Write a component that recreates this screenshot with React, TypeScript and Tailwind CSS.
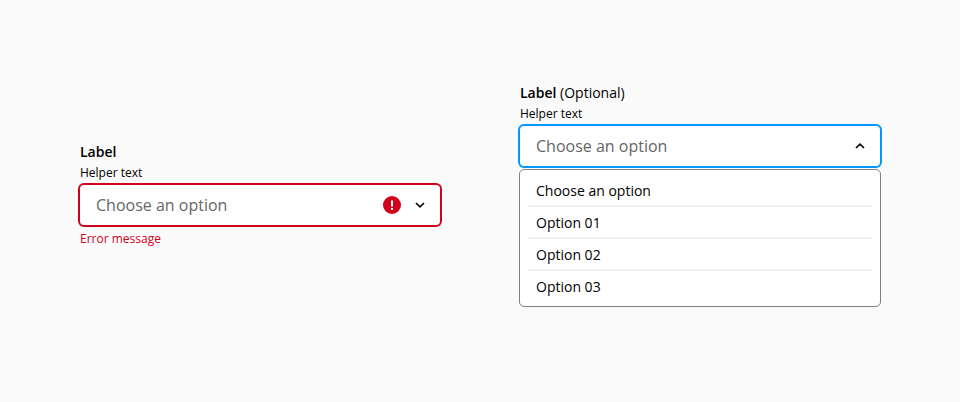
import React from 'react';

function Chevron({ up = false }: { up?: boolean }) {
  return (
    <svg width="10" height="6" viewBox="0 0 10 6" fill="none" className={up ? 'rotate-180' : ''}>
      <path d="M1 1L5 4.8L9 1" stroke="#000" strokeWidth="1.6" />
    </svg>
  );
}

function ErrorIcon() {
  return (
    <svg width="18" height="18" viewBox="0 0 18 18">
      <circle cx="9" cy="9" r="9" fill="#d0021b" />
      <rect x="8" y="4.5" width="2" height="6" fill="#fff" />
      <rect x="8" y="12" width="2" height="2" fill="#fff" />
    </svg>
  );
}

const options = ['Choose an option', 'Option 01', 'Option 02', 'Option 03'];

export default function App() {
  return (
    <main className="flex h-[402px] w-[960px] items-start bg-[#fafafa] pl-[78px] font-['Open_Sans',sans-serif] text-black">
      <section className="mt-[142px] w-[364px]">
        <div className="pl-0.5 text-sm leading-5 font-semibold">Label</div>
        <div className="mt-0.5 pl-0.5 text-xs leading-[18px]">Helper text</div>
        <div className="mt-px flex h-11 items-center rounded-[6px] border-2 border-[#d0021b] bg-white pr-[15px] pl-4">
          <span className="flex-1 text-base leading-6 text-[#666]">Choose an option</span>
          <ErrorIcon />
          <span className="ml-[14px]"><Chevron /></span>
        </div>
        <div className="mt-[3px] pl-0.5 text-xs leading-[18px] text-[#d0021b]">Error message</div>
      </section>
      <section className="mt-[83px] ml-[76px] w-[364px]">
        <div className="pl-0.5 text-sm leading-5"><span className="font-semibold">Label</span> (Optional)</div>
        <div className="mt-0.5 pl-0.5 text-xs leading-[18px]">Helper text</div>
        <div className="mt-px flex h-11 items-center rounded-[6px] border-2 border-[#0095ff] bg-white pr-[15px] pl-4">
          <span className="flex-1 text-base leading-6 text-[#666]">Choose an option</span>
          <Chevron up />
        </div>
        <ul className="mx-px mt-px h-[138px] rounded-[5px] border border-[#808080] bg-white px-2 pt-[5px]">
          {options.map((option, i) => (
            <li key={option} className={`flex h-8 items-center px-2 text-sm ${i < 3 ? 'border-b-2 border-[#f2f2f2] pt-0.5' : ''}`}>{option}</li>
          ))}
        </ul>
      </section>
    </main>
  );
}
